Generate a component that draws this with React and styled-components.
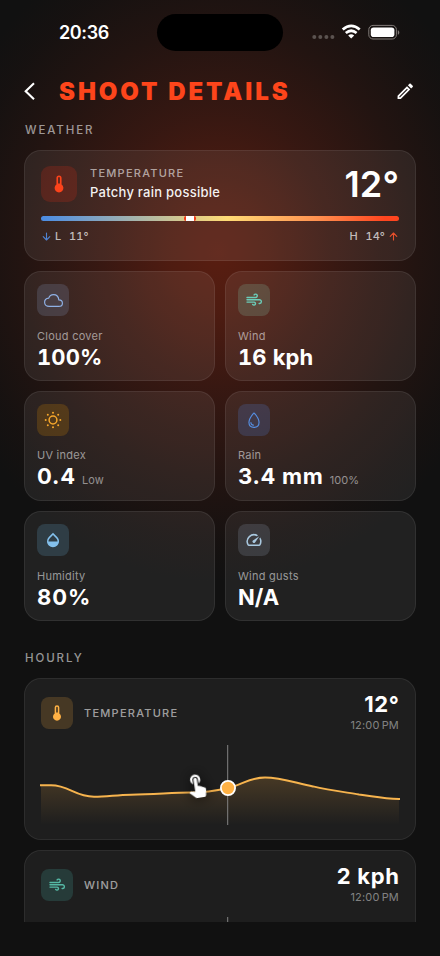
import React from "react";
import styled, { createGlobalStyle } from "styled-components";
import { MdOpacity, MdOutlineSpeed, MdTouchApp, MdOutlineEdit } from "react-icons/md";
import { IoWaterOutline, IoCloudOutline } from "react-icons/io5";

const GlobalStyle = createGlobalStyle`
  * { box-sizing: border-box; }
  body { margin: 0; background: #111; }
`;

const Screen = styled.main`
  width: 440px;
  height: 956px;
  overflow: hidden;
  display: flex;
  flex-direction: column;
  font-family: Inter, "Liberation Sans", sans-serif;
  color: #fff;
  background:
    radial-gradient(ellipse 290px 330px at 218px 252px, rgba(92, 30, 17, 0.96) 0%, rgba(86, 29, 17, 0.88) 18%, rgba(68, 26, 18, 0.74) 42%, rgba(46, 22, 17, 0.6) 68%, rgba(28, 18, 16, 0.45) 88%, rgba(17, 17, 17, 0) 100%),
    #111;
`;

const StatusBar = styled.header`
  height: 66px;
  flex: none;
  padding: 0 40px 0 58px;
  display: grid;
  grid-template-columns: 99px 126px 1fr;
  align-items: center;
`;

const Clock = styled.time`
  font-size: 18px;
  line-height: 22px;
  font-weight: 600;
  letter-spacing: -0.4px;
  padding-left: 1px;
`;

const Island = styled.div`
  height: 37px;
  margin-top: -1px;
  border-radius: 19px;
  background: #000;
`;

const StatusIcons = styled.div`
  display: flex;
  justify-content: flex-end;
  align-items: center;
  margin-top: -2px;
`;

const TitleBar = styled.div`
  height: 50px;
  flex: none;
  padding: 1px 25px 0 23px;
  display: flex;
  align-items: center;
`;

const Title = styled.h1`
  margin: 1px auto 0 22px;
  color: #fd451b;
  font-size: 24px;
  line-height: 30px;
  font-weight: 900;
  letter-spacing: 2.92px;
  white-space: nowrap;
`;

const IconButton = styled.button`
  border: 0;
  padding: 0;
  background: none;
  color: #fff;
  display: flex;
`;

const Scroller = styled.section`
  height: 806px;
  flex: none;
  overflow: hidden;
  padding: 0 24px;
  display: flex;
  flex-direction: column;
`;

const SectionLabel = styled.h2`
  flex: none;
  margin: ${(p) => p.$space || "0"};
  padding-left: 1px;
  height: 28px;
  line-height: 28px;
  font-size: 11.5px;
  font-weight: 500;
  letter-spacing: 1.9px;
  color: rgba(255, 255, 255, 0.57);
`;

const Card = styled.article`
  flex: none;
  border: 1px solid rgba(255, 255, 255, 0.075);
  border-radius: 17px;
  background: rgba(255, 255, 255, ${(p) => p.$fill || 0.07});
`;

const SummaryCard = styled(Card)`
  height: 111px;
  margin-top: 6px;
  padding: 15px 16px 0;
`;

const SummaryTop = styled.div`
  display: flex;
  align-items: center;
  height: 36px;
`;

const Condition = styled.div`
  margin: -1px auto 0 13px;
  display: flex;
  flex-direction: column;
`;

const Caps = styled.span`
  font-size: 11px;
  line-height: 18px;
  font-weight: 500;
  letter-spacing: 1.25px;
  color: rgba(255, 255, 255, 0.59);
`;

const ConditionCaps = styled(Caps)`
  margin-top: -2px;
`;

const ConditionText = styled.span`
  font-size: 13px;
  line-height: 19px;
  margin-top: 1px;
  font-weight: 500;
  letter-spacing: 0.26px;
  color: rgba(255, 255, 255, 0.94);
`;

const BigTemp = styled.strong`
  font-size: 36px;
  line-height: 36px;
  font-weight: 600;
  letter-spacing: 0.1px;
`;

const Scale = styled.div`
  height: 5px;
  margin-top: 14px;
  border-radius: 3px;
  display: flex;
  padding-left: 143px;
  background: linear-gradient(90deg, #4a8ce4 0%, #ffdb75 52%, #ff9150 77%, #ff451f 96%);
`;

const ScaleMark = styled.span`
  width: 12px;
  height: 5px;
  border: solid #f23b18;
  border-width: 0 2px;
  border-radius: 2px;
  background: #fff;
`;

const RangeRow = styled.div`
  margin-top: 7px;
  height: 16px;
  display: flex;
  justify-content: space-between;
  color: rgba(255, 255, 255, 0.7);
  font-size: 11px;
  line-height: 16px;
  font-weight: 500;
  letter-spacing: 0.1px;
  font-variant-numeric: tabular-nums;
`;

const Range = styled.span`
  display: flex;
  align-items: center;
  padding: 0 1px;
`;

const RangeName = styled.span`
  width: ${(p) => p.$w}px;
  margin-left: 4px;
`;

const HighDegrees = styled.span`
  margin-right: 4px;
`;

const Grid = styled.div`
  flex: none;
  margin-top: 10px;
  display: grid;
  grid-template-columns: 1fr 1fr;
  grid-auto-rows: 110px;
  gap: 10px;
`;

const StatCard = styled(Card)`
  padding: 12px;
`;

const Tile = styled.span`
  flex: none;
  width: ${(p) => p.$size || 32}px;
  height: ${(p) => p.$size || 32}px;
  border-radius: ${(p) => (p.$size ? 9 : 8)}px;
  display: flex;
  align-items: center;
  justify-content: center;
  color: ${(p) => p.$color};
  background: ${(p) => p.$bg};
`;

const StatLabel = styled.div`
  margin-top: ${(p) => (p.$raised ? 12 : 13)}px;
  font-size: 11px;
  line-height: 14px;
  letter-spacing: 0.25px;
  color: rgba(255, 255, 255, 0.54);
`;

const StatValue = styled.div`
  display: flex;
  align-items: baseline;
  gap: 6px;
  font-size: 22px;
  line-height: 28px;
  font-weight: 650;
  letter-spacing: ${(p) => p.$spacing || 0.5}px;
  font-variant-numeric: ${(p) => (p.$tabular ? "tabular-nums" : "normal")};
`;

const StatNote = styled.span`
  font-size: 11px;
  font-weight: 400;
  letter-spacing: 0.1px;
  color: rgba(255, 255, 255, 0.5);
`;

const HourlyCard = styled(Card)`
  height: 162px;
  margin-top: ${(p) => p.$space}px;
  padding: 11px 16px 0;
`;

const HourlyHead = styled.div`
  height: 46px;
  display: flex;
  align-items: center;
`;

const HourlyName = styled(Caps)`
  margin: 0 auto 0 11px;
`;

const Reading = styled.div`
  display: flex;
  flex-direction: column;
  align-items: flex-end;
  margin-top: -3px;
`;

const ReadingValue = styled.strong`
  font-size: 22px;
  line-height: 27px;
  font-weight: 650;
  letter-spacing: 0.7px;
  margin-right: -0.7px;
`;

const ReadingTime = styled.span`
  font-size: 11px;
  line-height: 15px;
  color: rgba(255, 255, 255, 0.46);
  letter-spacing: 0.2px;
  word-spacing: -1.3px;
`;

const Plot = styled.div`
  position: relative;
  height: 81px;
  margin-top: 9px;
`;

const Chart = styled.svg`
  display: block;
  width: 358px;
  height: 81px;
  overflow: visible;
`;

const TouchHint = styled.div`
  position: absolute;
  left: 142px;
  top: 26px;
  display: flex;
  transform: rotate(-9deg);
  filter: drop-shadow(0 0 7px rgba(0, 0, 0, 0.85));
`;

const RainDrop = styled(IoWaterOutline)`
  transform: scaleX(-1);
  stroke-width: 1.2;
`;

function Thermometer({ size = 22 }) {
  return (
    <svg width={size} height={size} viewBox="0 0 24 24" fill="currentColor">
      <path fillRule="evenodd" d="M12 2.6a2.8 2.8 0 0 0-2.8 2.8v7.1a4.8 4.8 0 1 0 5.6 0V5.4A2.8 2.8 0 0 0 12 2.6Zm-1 2.8a1 1 0 0 1 2 0v6h-2Z" />
    </svg>
  );
}

function WindIcon() {
  return (
    <svg width="20" height="20" viewBox="0 0 20 20" fill="none" stroke="currentColor" strokeWidth="1.4" strokeLinecap="round">
      <path d="M3 7.5h8.6a1.7 1.7 0 1 0-1.5-2.6M3 9.8h12.4a1.8 1.8 0 0 1 .2 3.7h-.5M3 12.1h7a1.5 1.5 0 1 1-1.3 2.3" />
    </svg>
  );
}

function SunIcon() {
  return (
    <svg width="20" height="20" viewBox="0 0 20 20" fill="currentColor">
      <circle cx="10" cy="10" r="3.9" fill="none" stroke="currentColor" strokeWidth="1.5" />
      <circle cx="10" cy="2.7" r="1" /><circle cx="10" cy="17.3" r="1" />
      <circle cx="2.7" cy="10" r="1" /><circle cx="17.3" cy="10" r="1" />
      <circle cx="4.8" cy="4.8" r="1" /><circle cx="15.2" cy="4.8" r="1" />
      <circle cx="4.8" cy="15.2" r="1" /><circle cx="15.2" cy="15.2" r="1" />
    </svg>
  );
}

function Arrow({ up }) {
  return (
    <svg width="9" height="9" viewBox="0 0 9 9" fill="none" stroke={up ? "#e9502c" : "#4e83d2"} strokeWidth="1.1" strokeLinecap="round" strokeLinejoin="round">
      <path d={up ? "M4.5 8V1M1.2 4.3 4.5 1l3.3 3.3" : "M4.5 1v7M1.2 4.7 4.5 8l3.3-3.3"} />
    </svg>
  );
}

const stats = [
  { label: "Cloud cover", value: "100%", tabular: true, spacing: 0.15, icon: <IoCloudOutline size={19} />, color: "#8fb1e5", bg: "rgba(120, 130, 160, 0.27)" },
  { label: "Wind", value: "16 kph", tabular: true, spacing: 0.1, icon: <WindIcon />, color: "#6bcdb9", bg: "rgba(115, 140, 120, 0.34)" },
  { label: "UV index", value: "0.4", note: "Low", spacing: 0.85, icon: <SunIcon />, color: "#f5a72c", bg: "rgba(190, 125, 8, 0.25)" },
  { label: "Rain", value: "3.4 mm", note: "100%", spacing: 0.72, icon: <RainDrop size={18} />, color: "#568fe2", bg: "rgba(76, 104, 165, 0.3)" },
  { label: "Humidity", value: "80%", spacing: 0.95, icon: <MdOpacity size={18} />, color: "#83c0ec", bg: "rgba(85, 135, 165, 0.27)" },
  { label: "Wind gusts", value: "N/A", spacing: 0.05, icon: <MdOutlineSpeed size={18} />, color: "#a9c8df", bg: "rgba(145, 160, 180, 0.21)" },
];

function StatusBarView() {
  return (
    <StatusBar>
      <Clock>20:36</Clock>
      <Island />
      <StatusIcons>
        <svg width="88" height="20" viewBox="0 0 88 20">
          <g fill="#5b5350"><circle cx="2.3" cy="15" r="2" /><circle cx="8.3" cy="15" r="2" /><circle cx="14.4" cy="15" r="2" /><circle cx="20.4" cy="15" r="2" /></g>
          <g fill="none" stroke="#fff" strokeWidth="2.7"><path d="M30.7 7.6q8.5-7.5 17 0M33.8 11q5.4-4.5 10.8 0" /></g>
          <path d="M36.2 13.4q3-2.3 6 0l-3 3.2Z" fill="#fff" />
          <rect x="56.8" y="3.4" width="27.6" height="13.6" rx="4.2" fill="none" stroke="#827c79" />
          <rect x="58.8" y="5.4" width="23.6" height="9.6" rx="2.8" fill="#fff" />
          <path d="M85.8 8.2c2 .7 2 3.8 0 4.5Z" fill="#827c79" />
        </svg>
      </StatusIcons>
    </StatusBar>
  );
}

function HourlyHeader({ icon, color, bg, name, value }) {
  return (
    <HourlyHead>
      <Tile $color={color} $bg={bg}>{icon}</Tile>
      <HourlyName>{name}</HourlyName>
      <Reading>
        <ReadingValue>{value}</ReadingValue>
        <ReadingTime>12:00 PM</ReadingTime>
      </Reading>
    </HourlyHead>
  );
}

const curve = "M0 40.3H10C28 40.3 34 51.7 53 51.7C66 51.7 75 50 90 49.7C115 49.2 133 47.6 149 47.6C163 47.6 174 46 187 43C202 39.5 208 32.5 224 32.5C240 32.5 256 38.4 272 41.4C288 45.4 303 47 318 49.4C334 51.5 342 53.5 358 54";

export default function App() {
  return (
    <>
      <GlobalStyle />
      <Screen>
        <StatusBarView />
        <TitleBar>
          <IconButton aria-label="Back">
            <svg width="14" height="22" viewBox="0 0 14 22" fill="none" stroke="#fff" strokeWidth="2.1"><path d="M11 2.3 2.7 10.2l8.3 8" /></svg>
          </IconButton>
          <Title>SHOOT DETAILS</Title>
          <IconButton aria-label="Edit"><MdOutlineEdit size={20.5} /></IconButton>
        </TitleBar>
        <Scroller>
          <SectionLabel>WEATHER</SectionLabel>
          <SummaryCard>
            <SummaryTop>
              <Tile $size={36} $color="#fd431b" $bg="rgba(190, 43, 25, 0.26)"><Thermometer /></Tile>
              <Condition>
                <ConditionCaps>TEMPERATURE</ConditionCaps>
                <ConditionText>Patchy rain possible</ConditionText>
              </Condition>
              <BigTemp>12°</BigTemp>
            </SummaryTop>
            <Scale><ScaleMark /></Scale>
            <RangeRow>
              <Range><Arrow /><RangeName $w={14}>L</RangeName>11°</Range>
              <Range><RangeName $w={16}>H</RangeName><HighDegrees>14°</HighDegrees><Arrow up /></Range>
            </RangeRow>
          </SummaryCard>
          <Grid>
            {stats.map((s) => (
              <StatCard key={s.label}>
                <Tile $color={s.color} $bg={s.bg}>{s.icon}</Tile>
                <StatLabel $raised={!!s.note}>{s.label}</StatLabel>
                <StatValue $spacing={s.spacing} $tabular={s.tabular}>{s.value}{s.note && <StatNote>{s.note}</StatNote>}</StatValue>
              </StatCard>
            ))}
          </Grid>
          <SectionLabel $space="23px 0 0">HOURLY</SectionLabel>
          <HourlyCard $space={6} $fill={0.055}>
            <HourlyHeader icon={<Thermometer size={20} />} color="#ffb144" bg="rgba(255, 177, 68, 0.18)" name="TEMPERATURE" value="12°" />
            <Plot>
              <Chart viewBox="0 0 358 81">
                <defs>
                  <linearGradient id="warmFill" x1="0" y1="33" x2="0" y2="80" gradientUnits="userSpaceOnUse">
                    <stop stopColor="#ffb144" stopOpacity=".18" />
                    <stop offset="1" stopColor="#ffb144" stopOpacity="0" />
                  </linearGradient>
                </defs>
                <path d={`${curve}V81H0Z`} fill="url(#warmFill)" />
                <path d={curve} fill="none" stroke="#f7b44e" strokeWidth="2" strokeLinecap="square" />
                <path d="M186.7 0v80" stroke="#838383" />
                <circle cx="187" cy="43" r="7.1" fill="#ffb144" stroke="#fff" strokeWidth="1.8" />
              </Chart>
              <TouchHint><MdTouchApp size={27} /></TouchHint>
            </Plot>
          </HourlyCard>
          <HourlyCard $space={10} $fill={0.055}>
            <HourlyHeader icon={<WindIcon />} color="#55b8a5" bg="rgba(65, 155, 145, 0.23)" name="WIND" value="2 kph" />
            <Plot>
              <Chart viewBox="0 0 358 81"><path d="M186.7 0v80" stroke="#838383" /></Chart>
            </Plot>
          </HourlyCard>
        </Scroller>
      </Screen>
    </>
  );
}
